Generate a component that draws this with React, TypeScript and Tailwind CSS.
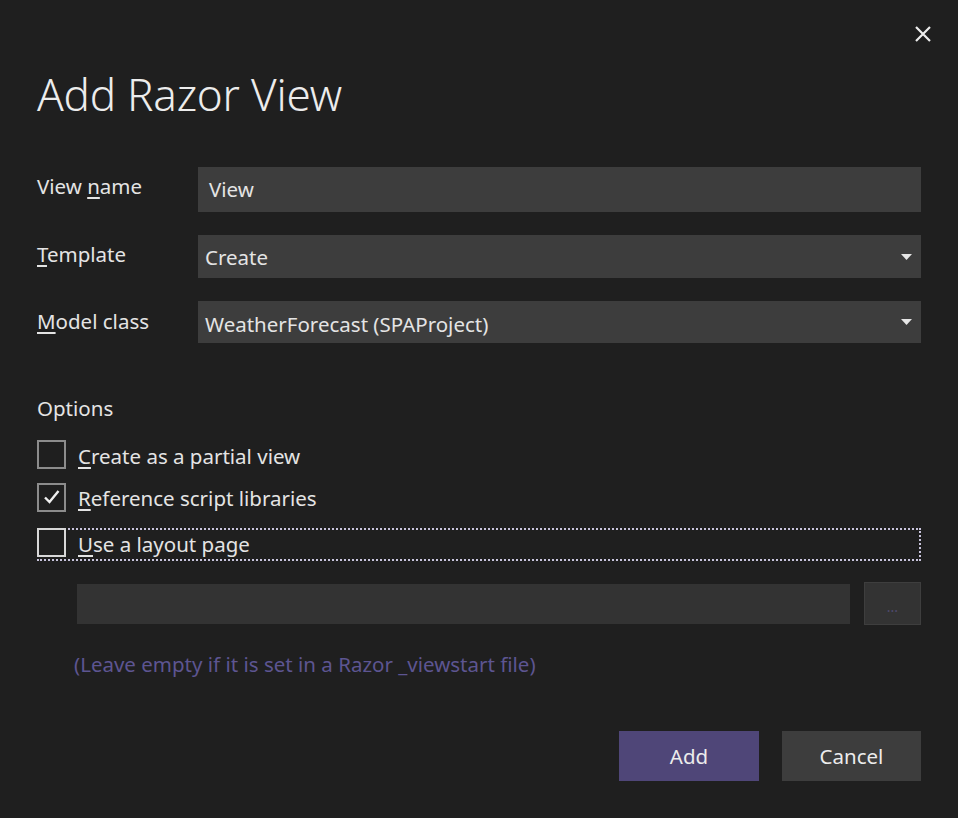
import React from "react";

const font = { fontFamily: '"Segoe UI", "Noto Sans", "Open Sans", sans-serif' };

function Caret() {
  return (
    <svg width="11" height="6" viewBox="0 0 11 6" className="shrink-0">
      <path d="M0 0 L11 0 L5.5 6 Z" fill="#e6e6e6" />
    </svg>
  );
}

function Checkbox({ checked, focused }: { checked?: boolean; focused?: boolean }) {
  return (
    <div
      className={
        "w-[29px] h-[29px] shrink-0 border-2 flex items-center justify-center " +
        (focused ? "border-[#d8d8d8]" : "border-[#8c8c8c]")
      }
    >
      {checked && (
        <svg width="18" height="16" viewBox="0 0 18 16">
          <path d="M2 8.5 L6.5 13 L15.5 2" stroke="#f0f0f0" strokeWidth="2.4" fill="none" />
        </svg>
      )}
    </div>
  );
}

export default function App() {
  return (
    <div className="relative w-[958px] h-[818px] bg-[#1f1f1f] text-[#e4e4e4] overflow-hidden" style={font}>
      {/* close */}
      <button className="absolute left-[914px] top-[25px] w-[18px] h-[18px]">
        <svg width="18" height="18" viewBox="0 0 18 18">
          <path d="M2 2 L16 16 M16 2 L2 16" stroke="#ececec" strokeWidth="2.2" />
        </svg>
      </button>

      <div className="px-[37px] pt-[68px] flex flex-col">
        <h1 className="text-[44px] leading-[52px] font-light text-[#ececec] tracking-[-0.2px]">Add Razor View</h1>

        <div className="mt-[47px] grid grid-cols-[161px_1fr] gap-y-[23px] items-center text-[20.5px]">
          <label className="leading-[26px] -mt-[8px]">
            View <u className="underline-offset-[3px]">n</u>ame
          </label>
          <div className="h-[45px] bg-[#3d3d3d] flex items-center px-[11px]">View</div>

          <label className="leading-[26px] -mt-[6px]">
            <u className="underline-offset-[3px]">T</u>emplate
          </label>
          <div className="h-[43px] bg-[#3d3d3d] flex items-center justify-between pl-[7px] pr-[9px]">
            <span className="mt-[2px]">Create</span>
            <Caret />
          </div>

          <label className="leading-[26px] -mt-[2px]">
            <u className="underline-offset-[3px]">M</u>odel class
          </label>
          <div className="h-[42px] bg-[#3d3d3d] flex items-center justify-between pl-[7px] pr-[9px]">
            <span className="mt-[5px]">WeatherForecast (SPAProject)</span>
            <Caret />
          </div>
        </div>

        <div className="mt-[52px] text-[20.5px] leading-[26px]">Options</div>

        <div className="mt-[18px] flex flex-col text-[20.5px]">
          <div className="flex items-center gap-[12px] h-[30px]">
            <Checkbox />
            <span className="mt-[4px]">
              <u className="underline-offset-[3px]">C</u>reate as a partial view
            </span>
          </div>
          <div className="mt-[13px] flex items-center gap-[12px] h-[30px]">
            <Checkbox checked />
            <span className="mt-[2px]">
              <u className="underline-offset-[3px]">R</u>eference script libraries
            </span>
          </div>
          <div className="mt-[16px] flex items-start gap-[12px] h-[33px] border-2 border-dotted border-[#c8c4dc]">
            <div className="-ml-[2px] -mt-[2px]">
              <Checkbox focused />
            </div>
            <span className="leading-[26px] mt-[1px]">
              <u className="underline-offset-[3px]">U</u>se a layout page
            </span>
          </div>
        </div>

        <div className="mt-[21px] pl-[40px] flex gap-[14px]">
          <div className="flex-1 h-[40px] bg-[#333333] mt-[2px]" />
          <div className="w-[57px] h-[43px] bg-[#333333] border border-[#3e3e3e] flex items-end justify-center pb-[10px] text-[#4f4a6e] text-[14px] leading-none">
            ...
          </div>
        </div>

        <div className="mt-[26px] pl-[37px] text-[20.5px] leading-[26px] text-[#5d5591]">
          (Leave empty if it is set in a Razor _viewstart file)
        </div>

        <div className="mt-[54px] flex justify-end gap-[23px] text-[20.5px]">
          <button className="w-[140px] h-[50px] bg-[#4f4678] text-[#ececec]">Add</button>
          <button className="w-[139px] h-[50px] bg-[#3d3d3d] text-[#ececec]">Cancel</button>
        </div>
      </div>
    </div>
  );
}
